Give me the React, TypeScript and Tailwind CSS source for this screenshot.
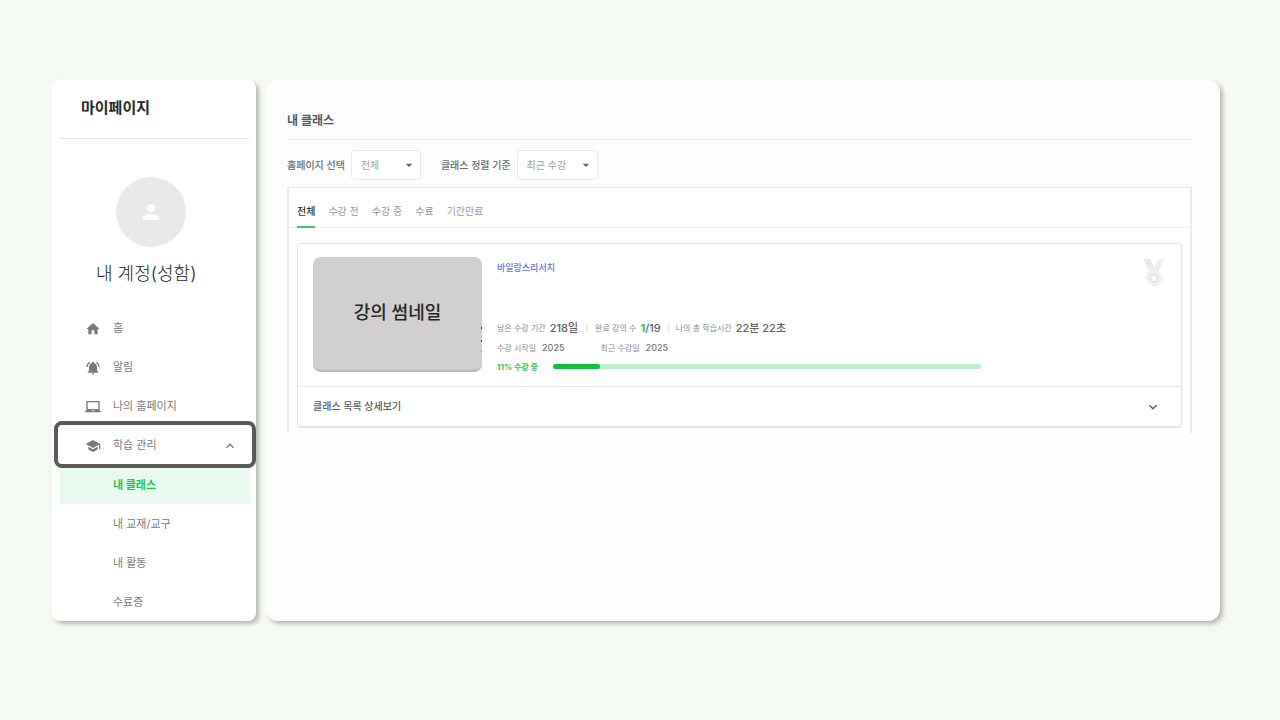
import { useState } from "react";
import type { IconType } from "react-icons";
import {
  MdArrowDropDown,
  MdHome,
  MdKeyboardArrowDown,
  MdKeyboardArrowUp,
  MdLaptopChromebook,
  MdNotificationsActive,
  MdPerson,
  MdSchool,
} from "react-icons/md";

type MenuItem = {
  label: string;
  icon: IconType;
};

const MENUS: MenuItem[] = [
  { label: "홈", icon: MdHome },
  { label: "알림", icon: MdNotificationsActive },
  { label: "나의 홈페이지", icon: MdLaptopChromebook },
];

const SUB_MENUS = ["내 클래스", "내 교재/교구", "내 활동", "수료증"];
const TABS = ["전체", "수강 전", "수강 중", "수료", "기간만료"];

const PROGRESS = 11;

function Sidebar() {
  const [isOpen, setIsOpen] = useState(true);

  return (
    <aside className="w-[204px] shrink-0 rounded-lg bg-white pl-2 pr-1.5 shadow-[3px_3px_4px_rgba(0,0,0,0.25)]">
      <h1 className="border-b border-[#e4e6e6] pb-0.5 pl-[21px] text-[15px] font-bold leading-[56px] text-[#26282b]">
        마이페이지
      </h1>

      <div className="flex flex-col items-start pt-[38px]">
        <div className="ml-14 flex h-[70px] w-[70px] items-center justify-center rounded-full bg-[#e9ebeb]">
          <MdPerson className="h-6 w-6 text-white" />
        </div>
        <p className="ml-9 mt-3 text-lg font-light leading-[30px] text-[#1c1c1c]">
          내 계정(성함)
        </p>
      </div>

      <nav className="mt-5 text-[11px] text-[#7a7a7a]">
        {MENUS.map(({ label, icon: Icon }) => (
          <a key={label} href="#" className="flex h-[39px] items-center pl-[25px]">
            <Icon className="mr-3 h-4 w-4" />
            {label}
          </a>
        ))}
        <button
          type="button"
          aria-expanded={isOpen}
          className="relative z-10 -mb-[3px] -ml-1.5 -mr-1.5 -mt-[5px] flex h-[47px] w-[202px] items-center rounded-lg border-4 border-[#5a5a5a] bg-white pl-[27px] pr-3.5 pt-0.5"
          onClick={() => setIsOpen(!isOpen)}
        >
          <MdSchool className="mr-3 h-4 w-4" />
          학습 관리
          <MdKeyboardArrowUp className="ml-auto h-4 w-4" />
        </button>
        {isOpen &&
          SUB_MENUS.map((label, i) => (
            <a
              key={label}
              href="#"
              className={`flex h-[39px] items-center pl-[53px] pt-0.5 ${
                i === 0 ? "bg-[#e8f9ef] font-bold text-[#1fc554]" : ""
              }`}
            >
              {label}
            </a>
          ))}
      </nav>
    </aside>
  );
}

type FilterProps = {
  id: string;
  label: string;
  options: string[];
  width: string;
};

function Filter({ id, label, options, width }: FilterProps) {
  return (
    <div className="flex items-center gap-1.5">
      <label htmlFor={id} className="font-medium text-[#6e6e6e]">
        {label}
      </label>
      <div className={`relative ${width}`}>
        <select
          id={id}
          className="block h-[30px] w-full appearance-none rounded-sm border border-[#e8e8e8] bg-white pl-[9px] text-[#a2a2a2] outline-none"
        >
          {options.map((option) => (
            <option key={option}>{option}</option>
          ))}
        </select>
        <MdArrowDropDown className="pointer-events-none absolute right-1 top-[7px] h-4 w-4 text-[#666]" />
      </div>
    </div>
  );
}

function Medal() {
  return (
    <svg viewBox="0 0 24 28" className="mt-px h-7 w-6 shrink-0">
      <path d="M1 1h7l5 11-5 2z" fill="#e9eaea" />
      <path d="M23 1h-7l-5 11 5 2z" fill="#eeefef" />
      <circle cx="12" cy="20" r="8" fill="#f0f1f1" />
      <circle cx="12" cy="20" r="5.500" fill="#e3e5e5" stroke="#f8f8f8" />
      <path
        d="m12 16.500 1.100 2.300 2.500.300-1.800 1.800.500 2.500-2.300-1.200-2.300 1.200.500-2.500-1.800-1.800 2.500-.300z"
        fill="#fff"
      />
    </svg>
  );
}

function ClassCard() {
  return (
    <article className="rounded-sm border border-b-2 border-[#e4e5e5]">
      <div className="flex items-start px-[15px] pb-[11px] pt-[13px]">
        <div className="relative flex h-[115px] w-[169px] shrink-0 items-center justify-center rounded-lg border-b-2 border-[#b9b9a9] bg-[#d0cece] pb-0.5 text-lg font-medium text-[#262626]">
          강의 썸네일
          <svg viewBox="0 0 2 30" className="absolute right-0 top-[69px] h-[30px] w-0.5">
            <path d="M1 1h1v2H1zM1 14h1v2H1z" fill="#444" />
            <path d="M1 25h1v1H1z" fill="#999" />
          </svg>
        </div>

        <div className="ml-[15px] flex-1 text-[8px] text-[#8a8a8a]">
          <a href="#" className="block pt-[3px] text-[9px] font-medium leading-4 text-[#6675d8]">
            바일랑스리서치
          </a>
          <div className="mt-[42px] flex h-5 items-center">
            <span>남은 수강 기간</span>
            <strong className="ml-1 text-[11px] font-medium text-[#616161]">218일</strong>
            <span className="mx-2 h-2 w-px bg-[#e0e0e0]" />
            <span>완료 강의 수</span>
            <strong className="ml-1 text-[11px] font-medium text-[#616161]">
              <span className="font-bold text-[#1fc554]">1</span>/19
            </strong>
            <span className="mx-[7px] h-2 w-px bg-[#e0e0e0]" />
            <span>나의 총 학습시간</span>
            <strong className="ml-1 text-[11px] font-medium text-[#616161]">22분 22초</strong>
          </div>
          <div className="flex h-5 items-center">
            <span>수강 시작일</span>
            <strong className="ml-1.5 text-[9px] font-medium text-[#757575]">2025</strong>
            <span className="ml-9">최근 수강일</span>
            <strong className="ml-1.5 text-[9px] font-medium text-[#757575]">2025</strong>
          </div>
          <div className="flex h-[17px] items-center">
            <span className="w-14 font-bold text-[#1fc554]">{PROGRESS}% 수강 중</span>
            <div className="h-[5px] w-[428px] rounded-full bg-[#c1f0cf]">
              <div
                className="h-full rounded-full bg-[#0fbf3e]"
                style={{ width: `${PROGRESS}%` }}
              />
            </div>
          </div>
        </div>

        <Medal />
      </div>

      <button
        type="button"
        className="flex h-10 w-full items-center justify-between border-t border-[#e8e9e9] pl-[15px] pr-5 font-medium text-[#5c5c5c]"
      >
        클래스 목록 상세보기
        <MdKeyboardArrowDown className="h-4 w-4" />
      </button>
    </article>
  );
}

export default function App() {
  const [tab, setTab] = useState(TABS[0]);

  return (
    <div className="flex min-h-screen items-start bg-[#f4f9f2] font-['Inter','Noto_Sans_CJK_KR',sans-serif]">
      <div className="flex flex-1 gap-2.5 py-20 pl-[52px] pr-[60px]">
        <Sidebar />

        <main className="flex-1 rounded-xl bg-[#fbfdfc] pl-[21px] pr-7 pt-[23px] text-[10px] shadow-[3px_3px_4px_rgba(0,0,0,0.25)]">
          <h2 className="border-b border-[#e6e8e8] text-xs font-bold leading-9 text-[#55585b]">
            내 클래스
          </h2>

          <div className="flex gap-5 pb-[7px] pt-2.5">
            <Filter id="homepage" label="홈페이지 선택" options={["전체"]} width="w-[70px]" />
            <Filter
              id="sort"
              label="클래스 정렬 기준"
              options={["최근 수강", "이름순"]}
              width="w-[81px]"
            />
          </div>

          <section className="border-x-2 border-t border-[#eaecec] bg-white">
            <div className="flex gap-[13px] border-b border-[#eceeee] px-2">
              {TABS.map((label) => (
                <button
                  key={label}
                  type="button"
                  className={`-mb-px h-10 border-b-2 pt-2 ${
                    label === tab
                      ? "border-[#3fc667] font-medium text-[#333]"
                      : "border-transparent text-[#9b9b9b]"
                  }`}
                  onClick={() => setTab(label)}
                >
                  {label}
                </button>
              ))}
            </div>
            <div className="px-2 pb-[5px] pt-[15px]">
              <ClassCard />
            </div>
          </section>
        </main>
      </div>
    </div>
  );
}
